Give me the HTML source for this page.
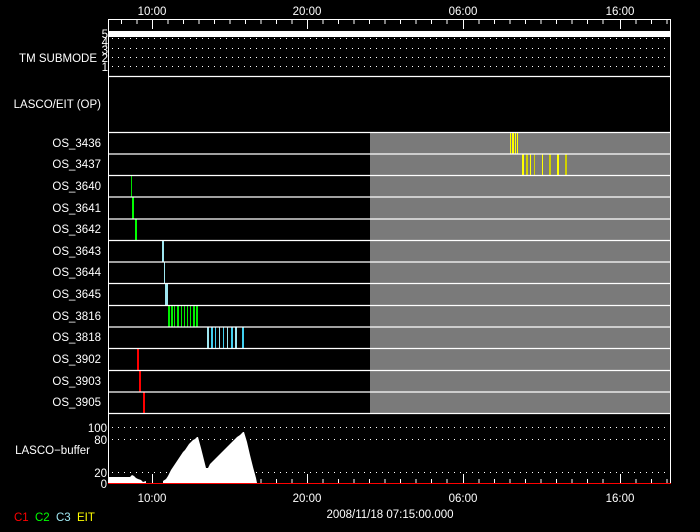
<!DOCTYPE html>
<html><head><style>
html,body{margin:0;padding:0;background:#000;width:700px;height:532px;overflow:hidden}
svg text{font-family:"Liberation Sans",sans-serif;font-size:11.5px;fill:#fff}
</style></head><body>
<svg width="700" height="532" viewBox="0 0 700 532" xmlns="http://www.w3.org/2000/svg">
<rect width="700" height="532" fill="#000"/>
<!-- gray region -->
<rect x="370" y="132" width="301" height="281" fill="#7a7a7a"/>
<!-- submode white bar -->
<rect x="109" y="31" width="562" height="6" fill="#fff"/>
<g stroke="#fff" stroke-width="1" stroke-dasharray="1 5">
<line x1="112" y1="38.5" x2="671" y2="38.5"/>
<line x1="112" y1="48.5" x2="671" y2="48.5"/>
<line x1="112" y1="57.5" x2="671" y2="57.5"/>
<line x1="112" y1="66.5" x2="671" y2="66.5"/>
<line x1="112" y1="427.5" x2="671" y2="427.5"/>
<line x1="112" y1="439.5" x2="671" y2="439.5"/>
<line x1="112" y1="472.5" x2="671" y2="472.5"/>
</g>
<!-- buffer fill -->
<polygon fill="#fff" points="109,483 109,477 130,477 132,475 134,476 136,478 138,479 141,480 143,482 146,481 146,483 163,483 163,481 166,479 168,476 169,474 171,470 173,467 175,464 177,461 179,458 181,455 183,452 185,450 187,447 189,444 191,442 193,440 195,439 197,437 198,437 201,448 204,460 206,468 208,468 210,464 213,461 216,458 219,455 222,452 225,449 228,446 231,443 234,440 237,437 240,435 243,432 244,432 247,442 250,455 253,467 256,478 257,483"/>
<!-- OS bars -->
<g>
<rect x="131" y="175" width="1" height="22" fill="#00e000"/>
<rect x="132" y="197" width="2" height="22" fill="#00ff00"/>
<rect x="135" y="219" width="2" height="21" fill="#00ff00"/>
<rect x="162" y="240" width="2" height="22" fill="#9ee6f0"/>
<rect x="164" y="262" width="1" height="21" fill="#9ee6f0"/>
<rect x="165" y="283" width="3" height="22" fill="#9ee6f0"/>
<g fill="#00ee00">
<rect x="168" y="305" width="2" height="22"/><rect x="171" y="305" width="2" height="22"/><rect x="174" y="305" width="1" height="22"/><rect x="177" y="305" width="2" height="22"/><rect x="181" y="305" width="1" height="22"/><rect x="184" y="305" width="1" height="22"/><rect x="187" y="305" width="1" height="22"/><rect x="190" y="305" width="1" height="22"/><rect x="193" y="305" width="2" height="22"/><rect x="196" y="305" width="2" height="22"/>
</g>
<g fill="#40d0f0">
<rect x="207" y="327" width="2" height="21" fill="#9ee6f0"/><rect x="211" y="327" width="2" height="21"/><rect x="215" y="327" width="1" height="21"/><rect x="219" y="327" width="1" height="21" fill="#9ee6f0"/><rect x="223" y="327" width="1" height="21"/><rect x="227" y="327" width="1" height="21" fill="#9ee6f0"/><rect x="231" y="327" width="2" height="21"/><rect x="235" y="327" width="2" height="21" fill="#9ee6f0"/><rect x="242" y="327" width="2" height="21"/>
</g>
<rect x="137" y="348" width="2" height="22" fill="#ff0000"/>
<rect x="139" y="370" width="2" height="22" fill="#ff0000"/>
<rect x="143" y="392" width="2" height="21" fill="#ff0000"/>
<g fill="#ffff00">
<rect x="510" y="132" width="1" height="22"/><rect x="512" y="132" width="2" height="22"/><rect x="515" y="132" width="1" height="22"/><rect x="517" y="132" width="1" height="22"/>
<rect x="522" y="154" width="2" height="21"/><rect x="526" y="154" width="2" height="21" fill="#d0d000"/><rect x="530" y="154" width="1" height="21"/><rect x="534" y="154" width="1" height="21" fill="#d0d000"/><rect x="542" y="154" width="1" height="21"/><rect x="549" y="154" width="2" height="21" fill="#d0d000"/><rect x="557" y="154" width="2" height="21"/><rect x="565" y="154" width="2" height="21" fill="#d0d000"/>
</g>
</g>
<!-- row separators -->
<g stroke="#fff" stroke-width="1.3">
<line x1="108" y1="76.5" x2="671" y2="76.5"/>
<line x1="108" y1="132.5" x2="671" y2="132.5"/>
<line x1="108" y1="154" x2="671" y2="154"/>
<line x1="108" y1="175.5" x2="671" y2="175.5"/>
<line x1="108" y1="197" x2="671" y2="197"/>
<line x1="108" y1="219" x2="671" y2="219"/>
<line x1="108" y1="240.5" x2="671" y2="240.5"/>
<line x1="108" y1="262" x2="671" y2="262"/>
<line x1="108" y1="283.5" x2="671" y2="283.5"/>
<line x1="108" y1="305.5" x2="671" y2="305.5"/>
<line x1="108" y1="327" x2="671" y2="327"/>
<line x1="108" y1="348.5" x2="671" y2="348.5"/>
<line x1="108" y1="370.5" x2="671" y2="370.5"/>
<line x1="108" y1="392" x2="671" y2="392"/>
<line x1="108" y1="413.5" x2="671" y2="413.5"/>
</g>
<!-- frame -->
<rect x="108.5" y="19.5" width="562" height="464" fill="none" stroke="#fff" stroke-width="1"/>
<line x1="108" y1="483.5" x2="671" y2="483.5" stroke="#ff0000" stroke-width="1"/>
<!-- ticks -->
<g stroke="#fff" stroke-width="1" id="ticks">
<path d="M121.5 20v4M137 20v4M152.5 20v9M168 20v4M183.5 20v4M199 20v4M214.5 20v4M230 20v4M245.5 20v4M261 20v4M276.5 20v4M292 20v4M307.5 20v9M323 20v4M338.5 20v4M354 20v4M369.5 20v4M385 20v4M400.5 20v4M416 20v4M431.5 20v4M447 20v4M463.5 20v9M479 20v4M494.5 20v4M510 20v4M525.5 20v4M541 20v4M556.5 20v4M572 20v4M587.5 20v4M603 20v4M620.5 20v9M636 20v4M651.5 20v4M667 20v4"/>
<path d="M121.5 483v-4M137 483v-4M152.5 483v-9M168 483v-4M183.5 483v-4M199 483v-4M214.5 483v-4M230 483v-4M245.5 483v-4M261 483v-4M276.5 483v-4M292 483v-4M307.5 483v-9M323 483v-4M338.5 483v-4M354 483v-4M369.5 483v-4M385 483v-4M400.5 483v-4M416 483v-4M431.5 483v-4M447 483v-4M463.5 483v-9M479 483v-4M494.5 483v-4M510 483v-4M525.5 483v-4M541 483v-4M556.5 483v-4M572 483v-4M587.5 483v-4M603 483v-4M620.5 483v-9M636 483v-4M651.5 483v-4M667 483v-4"/>
</g>
<!-- axis labels -->
<g text-anchor="middle">
<text x="152" y="15">10:00</text><text x="307" y="15">20:00</text><text x="463" y="15">06:00</text><text x="620" y="15">16:00</text>
<text x="152" y="502">10:00</text><text x="307" y="502">20:00</text><text x="463" y="502">06:00</text><text x="620" y="502">16:00</text>
<text x="390" y="518">2008/11/18 07:15:00.000</text>
</g>
<g text-anchor="end">
<text x="97" y="62">TM SUBMODE</text>
<text x="101" y="108">LASCO/EIT (OP)</text>
<text x="101" y="147">OS_3436</text>
<text x="101" y="168">OS_3437</text>
<text x="101" y="190">OS_3640</text>
<text x="101" y="212">OS_3641</text>
<text x="101" y="233">OS_3642</text>
<text x="101" y="255">OS_3643</text>
<text x="101" y="276">OS_3644</text>
<text x="101" y="298">OS_3645</text>
<text x="101" y="320">OS_3816</text>
<text x="101" y="341">OS_3818</text>
<text x="101" y="363">OS_3902</text>
<text x="101" y="385">OS_3903</text>
<text x="101" y="406">OS_3905</text>
<text x="90" y="454">LASCO−buffer</text>
<text x="107" y="432">100</text>
<text x="107" y="444">80</text>
<text x="107" y="477">20</text>
<text x="107" y="488">0</text>
</g>
<g text-anchor="end" style="font-size:10px">
<text x="108" y="38">5</text><text x="108" y="46">4</text><text x="108" y="54">3</text><text x="108" y="62">2</text><text x="108" y="71">1</text>
</g>
<g style="font-size:10px">
<text x="14" y="521" style="fill:#ff0000">C1</text>
<text x="35" y="521" style="fill:#00ff00">C2</text>
<text x="56" y="521" style="fill:#9ee6f0">C3</text>
<text x="77" y="521" style="fill:#ffff00">EIT</text>
</g>
</svg>
</body></html>
